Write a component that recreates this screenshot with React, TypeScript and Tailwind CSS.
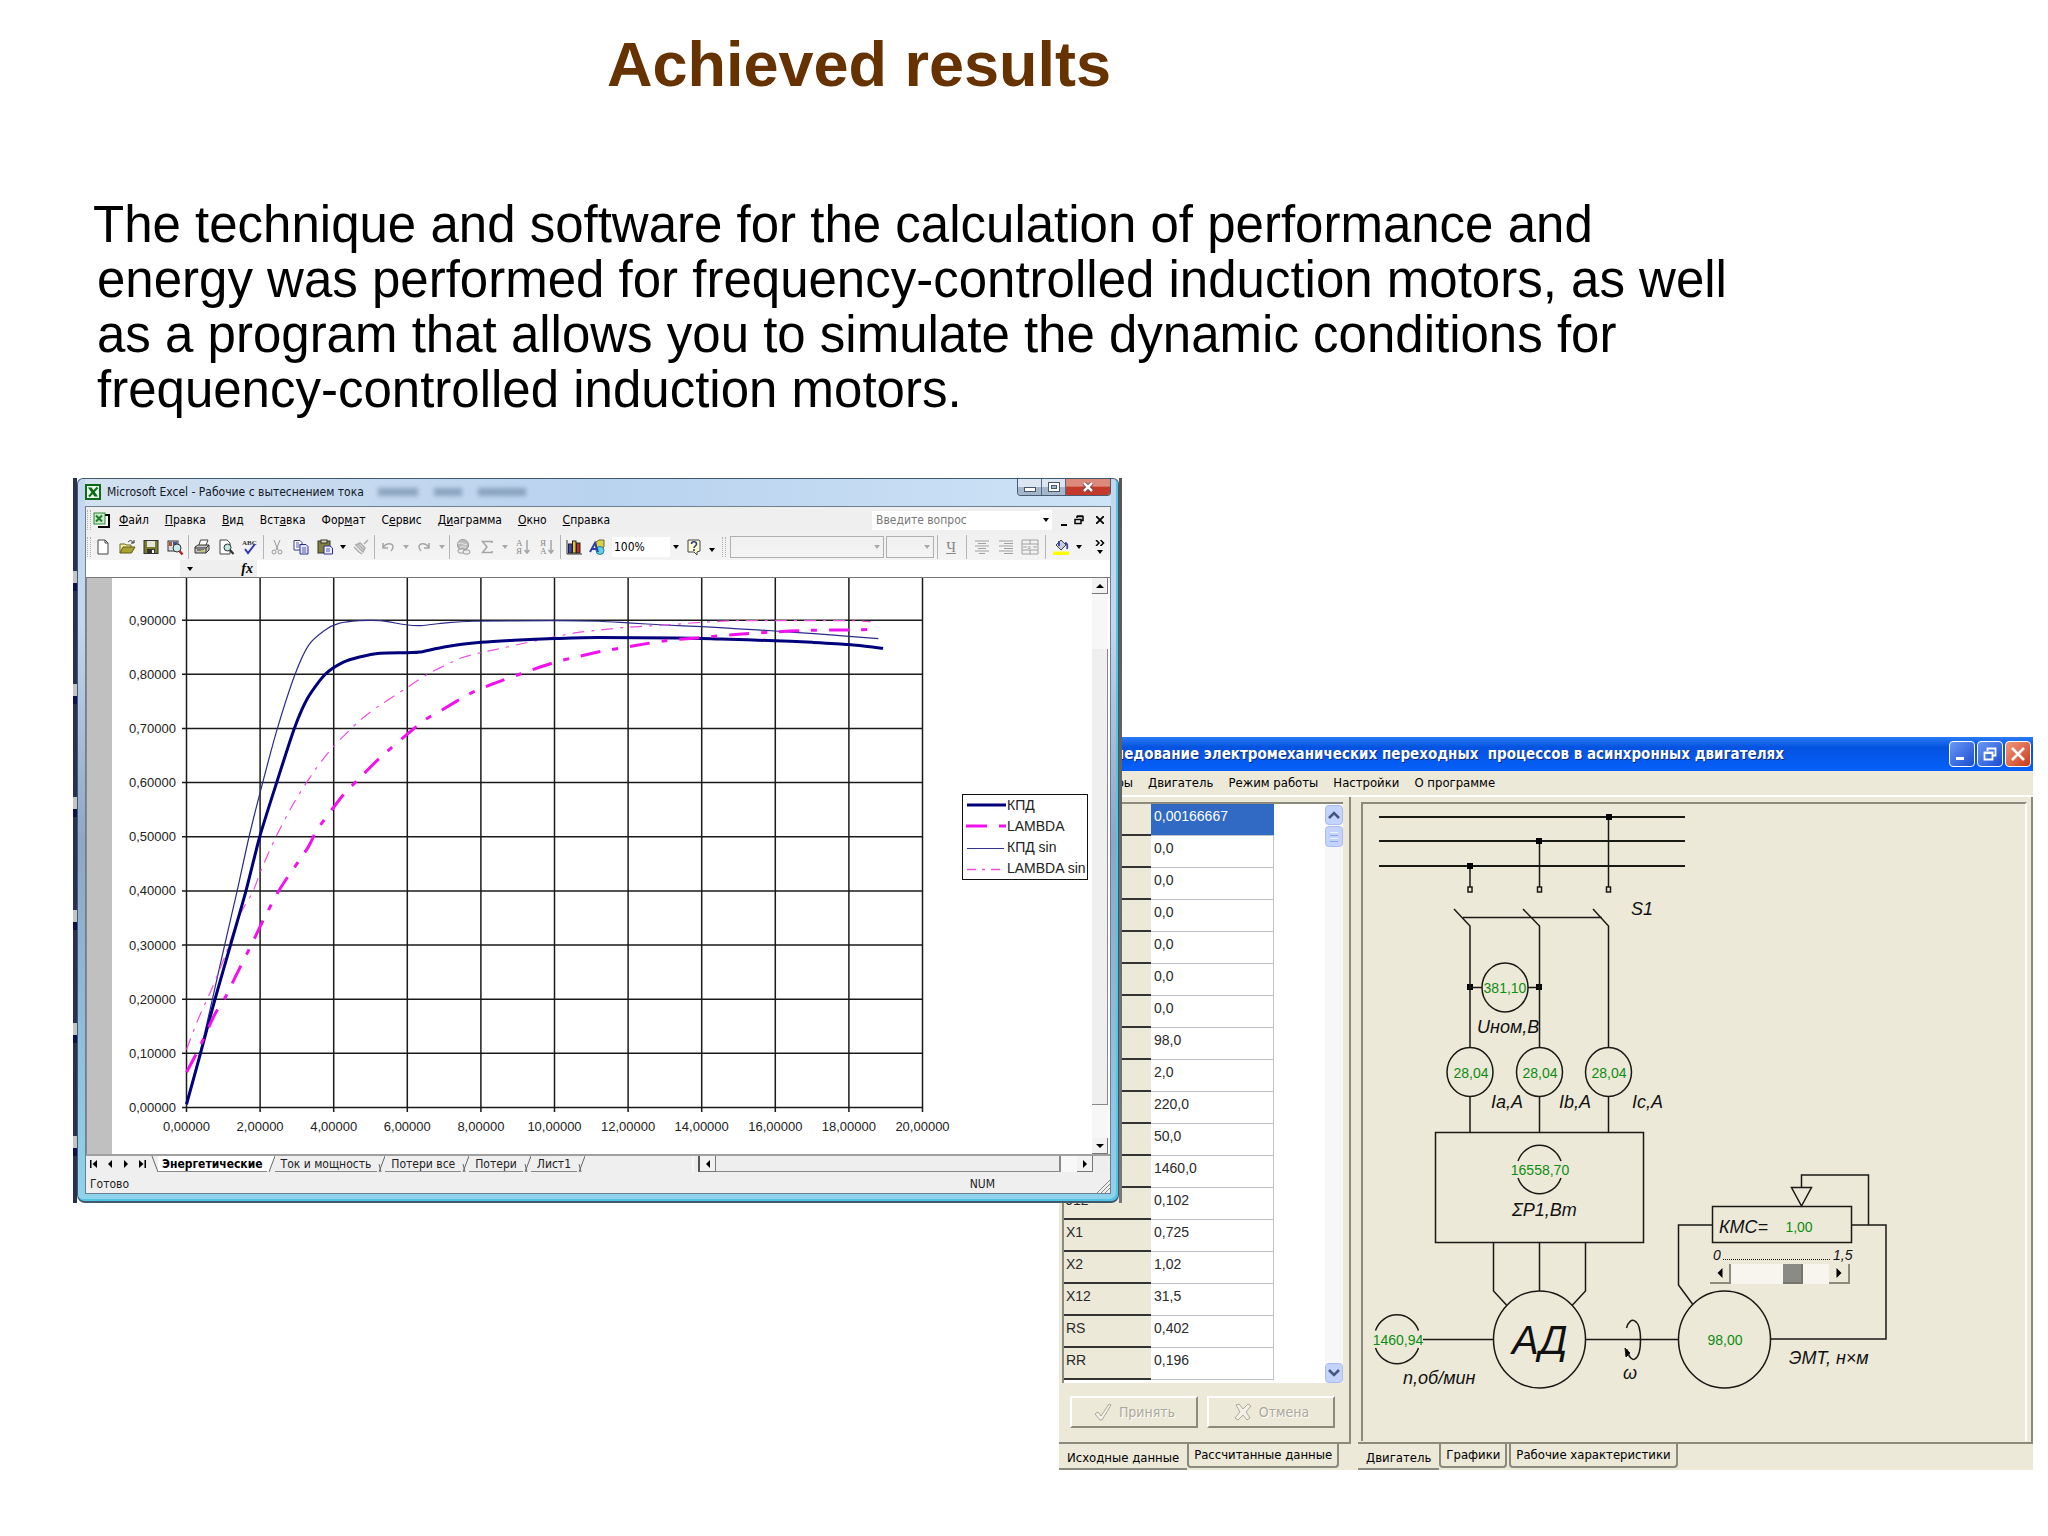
import React from 'react';

type Point = [number, number];

const KPD: Point[] = [
  [0, 0.006], [0.36, 0.095], [0.77, 0.199], [1.2, 0.301], [1.62, 0.401], [1.99, 0.5], [2.45, 0.6],
  [2.93, 0.7], [3.3, 0.757], [3.77, 0.8], [4.25, 0.822], [4.7, 0.832], [5.26, 0.839], [6.01, 0.84],
  [6.34, 0.841], [7.04, 0.851], [8, 0.859], [8.9, 0.863], [10, 0.866], [11.2, 0.868], [13.3, 0.867],
  [14.5, 0.865], [16, 0.862], [17, 0.859], [18, 0.855], [18.93, 0.848],
];

const KPD_SIN: Point[] = [
  [0, 0.006], [0.4, 0.11], [0.77, 0.22], [1.04, 0.301], [1.38, 0.401], [1.7, 0.5], [2.07, 0.6], [2.47, 0.7],
  [2.95, 0.8], [3.32, 0.854], [3.75, 0.881], [4.14, 0.894], [4.7, 0.899], [5.26, 0.899], [6.01, 0.891],
  [6.38, 0.89], [7.04, 0.895], [7.8, 0.898], [10, 0.899], [11.2, 0.898], [12, 0.895], [13, 0.891],
  [14, 0.888], [15, 0.884], [16, 0.88], [17.05, 0.875], [18, 0.87], [18.8, 0.866],
];

const LAMBDA: Point[] = [
  [0, 0.065], [0.31, 0.105], [0.77, 0.172], [1.06, 0.204], [1.34, 0.243], [1.76, 0.3], [2.08, 0.345],
  [2.55, 0.405], [3.3, 0.48], [3.53, 0.511], [3.95, 0.55], [4.28, 0.579], [4.7, 0.608], [5.26, 0.646],
  [6.01, 0.69], [6.48, 0.716], [6.94, 0.734], [7.69, 0.764], [8.35, 0.783], [9.09, 0.801], [10, 0.822],
  [10.6, 0.832], [11.25, 0.842], [12.2, 0.853], [13, 0.862], [14, 0.868], [15, 0.874], [15.9, 0.878],
  [16.8, 0.881], [18, 0.882], [18.8, 0.883],
];

const LAMBDA_SIN: Point[] = [
  [0, 0.107], [0.31, 0.162], [0.68, 0.218], [1.06, 0.282], [1.43, 0.353], [1.8, 0.398], [2.02, 0.437],
  [2.41, 0.497], [2.93, 0.564], [3.49, 0.623], [4, 0.667], [4.7, 0.714], [5.26, 0.743], [6.01, 0.776],
  [6.57, 0.801], [7.5, 0.831], [8.35, 0.845], [9.28, 0.859], [10, 0.869], [10.6, 0.877], [11.25, 0.882],
  [12, 0.887], [13, 0.891], [14, 0.896], [15, 0.899], [18, 0.899], [18.6, 0.897],
];

const X_TICKS = [0, 2, 4, 6, 8, 10, 12, 14, 16, 18, 20];
const Y_TICKS = [0, 0.1, 0.2, 0.3, 0.4, 0.5, 0.6, 0.7, 0.8, 0.9];

const chartX = (v: number) => 74.5 + v * 36.8;
const chartY = (v: number) => 529.5 - v * 541.5;
const tickLabel = (v: number) => v.toFixed(5).replace('.', ',');

// Catmull-Rom spline through the measured points
const toPath = (data: Point[]) => {
  const pts = data.map(([x, y]) => [chartX(x), chartY(y)]);
  let d = `M${pts[0][0]} ${pts[0][1]}`;
  for (let i = 0; i < pts.length - 1; i++) {
    const p0 = pts[Math.max(i - 1, 0)];
    const p1 = pts[i];
    const p2 = pts[i + 1];
    const p3 = pts[Math.min(i + 2, pts.length - 1)];
    d += `C${p1[0] + (p2[0] - p0[0]) / 8} ${p1[1] + (p2[1] - p0[1]) / 8}`;
    d += ` ${p2[0] - (p3[0] - p1[0]) / 8} ${p2[1] - (p3[1] - p1[1]) / 8} ${p2[0]} ${p2[1]}`;
  }
  return d;
};

const EXCEL_MENU: [string, string, string][] = [
  ['', 'Ф', 'айл'],
  ['', 'П', 'равка'],
  ['', 'В', 'ид'],
  ['Вст', 'а', 'вка'],
  ['Фор', 'м', 'ат'],
  ['С', 'е', 'рвис'],
  ['Д', 'и', 'аграмма'],
  ['', 'О', 'кно'],
  ['', 'С', 'правка'],
];

const PARAMS: [string, string][] = [
  ['', '0,00166667'],
  ['', '0,0'],
  ['', '0,0'],
  ['', '0,0'],
  ['', '0,0'],
  ['', '0,0'],
  ['', '0,0'],
  ['', '98,0'],
  ['', '2,0'],
  ['', '220,0'],
  ['', '50,0'],
  ['', '1460,0'],
  ['J12', '0,102'],
  ['X1', '0,725'],
  ['X2', '1,02'],
  ['X12', '31,5'],
  ['RS', '0,402'],
  ['RR', '0,196'],
];

const Tool = ({ label, children }: { label: string; children: React.ReactNode }) => (
  <button aria-label={label} className="flex h-5 w-6 shrink-0 items-center justify-center">
    <svg viewBox="0 0 16 16" className="size-4 overflow-visible" fill="none">
      {children}
    </svg>
  </button>
);

const Arrow = ({ label, muted = false }: { label: string; muted?: boolean }) => (
  <button aria-label={label} className="flex h-5 w-3 shrink-0 items-center justify-center">
    <svg viewBox="0 0 6 4" className="h-1 w-1.5">
      <path d="M0 0h6L3 4z" fill={muted ? '#a9a9a9' : '#000'} />
    </svg>
  </button>
);

const Sep = () => <div className="mx-px h-6 w-px shrink-0 bg-[#b5b5b5]" />;

const Grip = () => <div className="h-5 w-1 shrink-0 border-x border-dotted border-[#b0b0b0]" />;

const ExcelLogo = () => (
  <svg viewBox="0 0 16 16" className="size-4 shrink-0">
    <rect x="1" y="1" width="14" height="14" fill="#e9f6e9" stroke="#0d6b17" strokeWidth="2" />
    <path d="M3 3.500h3.500L13 12.500H9.500z" fill="#0d6b17" />
    <path d="M12.500 3.500L4 12.500" stroke="#0d6b17" strokeWidth="2" />
  </svg>
);

const ScrollButton = ({ label, d }: { label: string; d: string }) => (
  <button
    aria-label={label}
    className="flex size-4 shrink-0 items-center justify-center border-r border-b border-[#777] bg-[#f3f2f3]"
  >
    <svg viewBox="0 0 8 8" className="size-2">
      <path d={d} fill="#000" />
    </svg>
  </button>
);

const ExcelTitleBar = () => (
  <div className="flex h-[27px] items-start justify-between bg-linear-to-r from-[#d3e1f0] via-[#b9d2ee] to-[#cde3f6]">
    <div className="flex items-center gap-1.5 pt-[5px]">
      <ExcelLogo />
      <span className="text-[12px] leading-4 whitespace-nowrap text-[#111827]">
        Microsoft Excel - Рабочие с вытеснением тока
      </span>
      <div className="ml-2 flex gap-4 blur-[2px]">
        <div className="h-2 w-10 bg-[#5a7391]/50" />
        <div className="h-2 w-7 bg-[#5a7391]/50" />
        <div className="h-2 w-12 bg-[#5a7391]/50" />
      </div>
    </div>
    <div className="flex h-[17px] overflow-hidden rounded-b border border-t-0 border-[#4a5b70]">
      <button
        aria-label="Свернуть"
        className="flex w-6 items-center justify-center border-r border-[#5a6b80] bg-linear-to-b from-[#dce6f0] from-50% to-[#a3b6ca] to-50%"
      >
        <svg viewBox="0 0 12 5" className="mt-1 h-[5px] w-3">
          <rect x="0.5" y="0.5" width="11" height="4" fill="#fff" stroke="#47566a" />
        </svg>
      </button>
      <button
        aria-label="Развернуть"
        className="flex w-6 items-center justify-center border-r border-[#5a6b80] bg-linear-to-b from-[#dce6f0] from-50% to-[#a3b6ca] to-50%"
      >
        <svg viewBox="0 0 12 10" className="h-2.5 w-3">
          <rect x="0.5" y="0.5" width="11" height="9" fill="#fff" stroke="#47566a" />
          <rect x="3.5" y="3.5" width="5" height="3" fill="#a3b6ca" stroke="#47566a" />
        </svg>
      </button>
      <button
        aria-label="Закрыть"
        className="flex w-[44px] items-center justify-center bg-linear-to-b from-[#dd8a7c] from-45% to-[#c23a2c] to-50%"
      >
        <svg viewBox="0 0 12 10" className="h-2.5 w-3">
          <path d="M2 1l8 8M10 1L2 9" stroke="#5c3330" strokeWidth="4" />
          <path d="M2 1l8 8M10 1L2 9" stroke="#fff" strokeWidth="2.5" />
        </svg>
      </button>
    </div>
  </div>
);

const ExcelMenuBar = () => (
  <div className="flex h-[26px] items-center bg-[#f0eff0] pr-1 pl-px">
    <Grip />
    <svg viewBox="0 0 18 17" className="ml-0.5 h-[17px] w-[18px] shrink-0">
      <path d="M7 3h9v12H5" fill="#fff" stroke="#000" strokeWidth="2" />
      <rect x="1" y="1" width="11" height="11" fill="#cfe8cf" stroke="#2a8a35" />
      <path d="M3 3.500l6 6M9 3.500l-6 6" stroke="#1c7d28" strokeWidth="2" />
    </svg>
    <nav className="ml-2 flex gap-4 text-[12px] leading-4 text-black">
      {EXCEL_MENU.map(([before, key, after]) => (
        <button key={before + key + after} className="whitespace-nowrap">
          {before}
          <u>{key}</u>
          {after}
        </button>
      ))}
    </nav>
    <input
      aria-label="Введите вопрос"
      placeholder="Введите вопрос"
      className="ml-auto h-[19px] w-[168px] bg-white px-1 text-[12px] leading-4 placeholder:text-[#777]"
    />
    <div className="bg-white">
      <Arrow label="Список вопросов" />
    </div>
    <button aria-label="Свернуть книгу" className="ml-1 flex h-4 w-4 items-end justify-center pb-0.5">
      <span className="h-0.5 w-1.5 bg-black" />
    </button>
    <button aria-label="Восстановить книгу" className="ml-0.5">
      <svg viewBox="0 0 10 10" className="size-2.5" fill="none" stroke="#000">
        <path d="M3 3V1.500h6v4H7M3 1h6" strokeWidth="1.5" />
        <path d="M1 4.500h6v4H1zM1 4.500h6" strokeWidth="1.5" />
      </svg>
    </button>
    <button aria-label="Закрыть книгу" className="mr-0.5 ml-3">
      <svg viewBox="0 0 8 8" className="size-2" stroke="#000" strokeWidth="1.8">
        <path d="M0 0l8 8M8 0L0 8" />
      </svg>
    </button>
  </div>
);

const ExcelToolbar = () => (
  <div className="flex h-[27px] items-center bg-linear-to-b from-[#f1f0f1] to-[#f5f4f5] pr-1 pl-px">
    <Grip />
    <Tool label="Создать">
      <path d="M3 1h7l3 3v11H3z" fill="#fff" stroke="#444" />
      <path d="M10 1v3h3" stroke="#444" />
    </Tool>
    <Tool label="Открыть">
      <path d="M1 14V5h5l1 1h5v3" fill="#f5ef9c" stroke="#6d6a1f" />
      <path d="M1 14l3-6h12l-3.500 6z" fill="#a8a333" stroke="#5d5a18" />
      <path d="M9 3c2-2 4-2 5 1M12 4h3V1" stroke="#333" />
    </Tool>
    <Tool label="Сохранить">
      <rect x="1" y="1.5" width="14" height="13" fill="#7b7c2c" stroke="#333" />
      <rect x="4" y="2" width="8" height="6" fill="#e5e6da" />
      <rect x="4" y="10" width="8" height="4" fill="#333" />
      <rect x="9" y="11" width="2" height="3" fill="#fff" />
    </Tool>
    <Tool label="Найти">
      <rect x="1" y="2" width="10" height="10" fill="#d8dde6" stroke="#333" />
      <rect x="2" y="3" width="3" height="4" fill="#b2552b" />
      <rect x="6" y="3" width="4" height="3" fill="#3a55a5" />
      <circle cx="10" cy="9" r="4" fill="#c8ecee" stroke="#333" />
      <path d="M12.500 12l3 3.500" stroke="#b5232c" strokeWidth="2.5" />
    </Tool>
    <Sep />
    <Tool label="Печать">
      <path d="M5 6l1.500-5H14l-2 5" fill="#fff" stroke="#444" />
      <path d="M1 8l3-2h11v5l-3 3H1z" fill="#c4c4c0" stroke="#333" />
      <path d="M1 9h11l3-3M12 9v5M3 11h7" stroke="#333" />
      <rect x="7" y="11" width="3" height="1.5" fill="#c8c32c" />
    </Tool>
    <Tool label="Просмотр">
      <path d="M2 1h7l3 3v11H2z" fill="#fff" stroke="#444" />
      <circle cx="9.5" cy="8.5" r="3.5" fill="#bde6df" stroke="#333" />
      <path d="M12 11l3.500 4" stroke="#333" strokeWidth="2" />
    </Tool>
    <Tool label="Орфография">
      <text x="0" y="6" fontSize="7" fontFamily="Liberation Serif, serif" fontWeight="700" fill="#333">ABC</text>
      <path d="M3 10l3 4 7-9" stroke="#3437b5" strokeWidth="2" />
    </Tool>
    <Sep />
    <Tool label="Вырезать">
      <path d="M5 1l4 10M11 1L7 11" stroke="#999" />
      <circle cx="5" cy="13" r="2" stroke="#999" />
      <circle cx="11" cy="13" r="2" stroke="#999" />
    </Tool>
    <Tool label="Копировать">
      <path d="M1 1.500h6l2 2V11H1z" fill="#fff" stroke="#3b3b7a" />
      <path d="M7 5.500h6l2 2V15H7z" fill="#e3e5ff" stroke="#2e2e91" />
      <path d="M3 4h3M3 6h4M3 8h4M9 9h4M9 11h4M9 13h4" stroke="#5659ad" />
    </Tool>
    <Tool label="Вставить">
      <rect x="1" y="2" width="12" height="12" fill="#84813c" stroke="#333" />
      <rect x="4" y="1" width="6" height="3" fill="#d8d8b5" stroke="#333" />
      <path d="M7 7h6l2.500 2v6H7z" fill="#eef" stroke="#2e2e91" />
      <path d="M9 10h4M9 12h4" stroke="#5659ad" />
    </Tool>
    <Arrow label="Параметры вставки" />
    <Tool label="Формат по образцу">
      <path d="M15 1l-4 4M3 6l4-2 5 5-2 4zM3 6l7 7M5 5l6 6M1 8l5 5 3 2" stroke="#aaa" strokeWidth="1.5" />
    </Tool>
    <Sep />
    <Tool label="Отменить">
      <path d="M3 4v5h5M3 9c2-5 10-6 10-1 0 2-1 3-2 4" stroke="#a5a5a5" strokeWidth="1.5" />
    </Tool>
    <Arrow label="История отмены" muted />
    <Tool label="Вернуть">
      <path d="M13 4v5H8M13 9C11 4 3 3 3 8c0 2 1 3 2 4" stroke="#a5a5a5" strokeWidth="1.5" />
    </Tool>
    <Arrow label="История возврата" muted />
    <Sep />
    <Tool label="Гиперссылка">
      <circle cx="8" cy="6" r="5.5" fill="#bbb" stroke="#999" />
      <path d="M3 5c3-3 6 2 9 0M5 9c2-3 4 0 6-1" stroke="#eee" />
      <rect x="3" y="10" width="7" height="4" rx="2" stroke="#999" fill="#eee" />
      <rect x="8" y="11" width="7" height="4" rx="2" stroke="#999" fill="#eee" />
    </Tool>
    <Tool label="Автосумма">
      <path d="M13 4V2.500H3.500L8 8l-4.500 5.500H13V12" stroke="#a5a5a5" strokeWidth="1.5" />
    </Tool>
    <Arrow label="Функции" muted />
    <Tool label="Сортировка по возрастанию">
      <text x="1" y="7" fontSize="9" fontFamily="Liberation Serif, serif" fill="#888">А</text>
      <text x="1" y="15" fontSize="9" fontFamily="Liberation Serif, serif" fill="#888">Я</text>
      <path d="M12 1v13M9.500 11l2.500 3 2.500-3" stroke="#a5a5a5" strokeWidth="1.5" />
    </Tool>
    <Tool label="Сортировка по убыванию">
      <text x="1" y="7" fontSize="9" fontFamily="Liberation Serif, serif" fill="#888">Я</text>
      <text x="1" y="15" fontSize="9" fontFamily="Liberation Serif, serif" fill="#888">А</text>
      <path d="M12 1v13M9.500 11l2.500 3 2.500-3" stroke="#a5a5a5" strokeWidth="1.5" />
    </Tool>
    <Sep />
    <Tool label="Мастер диаграмм">
      <path d="M1 1v14h15" stroke="#333" />
      <rect x="2.5" y="5" width="3.5" height="9" fill="#3c48c0" stroke="#222" />
      <rect x="6.5" y="2" width="3.5" height="12" fill="#e2c531" stroke="#222" />
      <rect x="10.5" y="4" width="3.5" height="10" fill="#c22c2c" stroke="#222" />
    </Tool>
    <Tool label="Рисование">
      <path d="M6 3l3-2h5v7l-3 2H6z" fill="#d8cf4a" stroke="#6d6a1f" />
      <circle cx="10" cy="11.5" r="4" fill="#5fd0e8" stroke="#2b7d93" />
      <path d="M0 13l5-9 3 9M2 10h5" stroke="#2b40a5" strokeWidth="2" />
    </Tool>
    <input
      aria-label="Масштаб"
      defaultValue="100%"
      className="ml-0.5 h-5 w-[58px] bg-white px-0.5 text-[12px] leading-4 text-black"
    />
    <Arrow label="Список масштабов" />
    <Tool label="Справка">
      <path d="M2 1h11l1 1v10l-3 1v3l-3-3H2z" fill="#fdfbd0" stroke="#444" />
      <path d="M5.500 5c0-3 5-3 5 0 0 2-2.500 2-2.500 4M8 10v2" stroke="#2b3a80" strokeWidth="1.6" />
    </Tool>
    <div className="self-end">
      <Arrow label="Кнопки панели" />
    </div>
    <div className="mx-1">
      <Grip />
    </div>
    <div className="flex h-[22px] w-[154px] justify-end border border-[#b0b0b0]">
      <Arrow label="Шрифт" muted />
    </div>
    <div className="ml-0.5 flex h-[22px] w-12 justify-end border border-[#b0b0b0]">
      <Arrow label="Размер шрифта" muted />
    </div>
    <div className="ml-0.5">
      <Sep />
    </div>
    <button aria-label="Подчеркнутый" className="w-6 font-['Liberation_Serif',serif] text-[15px] leading-4 text-[#888] underline">
      Ч
    </button>
    <div className="mx-0.5">
      <Sep />
    </div>
    <Tool label="По центру">
      <path d="M1 2h14M4 4.500h8M1 7h14M4 9.500h8M1 12h14M5 14.500h6" stroke="#a0a0a0" />
    </Tool>
    <Tool label="По правому краю">
      <path d="M1 2h14M6 4.500h9M1 7h14M6 9.500h9M1 12h14M6 14.500h9" stroke="#a0a0a0" />
    </Tool>
    <Tool label="Объединить">
      <path d="M0 1h16v14H0zM0 5h16M0 11h16M8 1v4M8 11v4M1 8h4M11 8h4" stroke="#a0a0a0" />
      <text x="5.5" y="10" fontSize="7" fontFamily="Liberation Serif, serif" fill="#888">a</text>
    </Tool>
    <div className="mx-0.5">
      <Sep />
    </div>
    <Tool label="Цвет заливки">
      <path d="M3 6l5-5 5 5-5 5z" fill="#c9cbd8" stroke="#444" />
      <path d="M6 2v5M12 4c2 0 3 2 2 6" stroke="#3240a0" strokeWidth="1.8" />
      <rect x="0" y="12.5" width="16" height="3.5" fill="#ff0" />
    </Tool>
    <Arrow label="Выбор цвета" />
    <button aria-label="Другие кнопки" className="ml-auto flex w-3 flex-col items-center gap-1">
      <svg viewBox="0 0 10 6" className="h-1.5 w-2.5" fill="none" stroke="#000" strokeWidth="1.5">
        <path d="M1 0l3 3-3 3M5.500 0l3 3-3 3" />
      </svg>
      <svg viewBox="0 0 6 4" className="h-1 w-1.5">
        <path d="M0 0h6L3 4z" />
      </svg>
    </button>
  </div>
);

const EfficiencyChart = () => (
  <svg
    viewBox="0 0 980 576"
    className="block min-w-0 flex-1 bg-white font-['Liberation_Sans',sans-serif] text-[13px]"
  >
    <g stroke="#1a1a1a" strokeWidth="1.5">
      {X_TICKS.map((t) => (
        <line key={t} x1={chartX(t)} x2={chartX(t)} y1="0" y2="534" />
      ))}
      {Y_TICKS.map((t) => (
        <line key={t} x1="70" x2="811" y1={chartY(t)} y2={chartY(t)} />
      ))}
    </g>
    <g fill="#222" textAnchor="middle">
      {X_TICKS.map((t) => (
        <text key={t} x={chartX(t)} y="553">
          {tickLabel(t)}
        </text>
      ))}
    </g>
    <g fill="#222" textAnchor="end">
      {Y_TICKS.map((t) => (
        <text key={t} x="64" y={chartY(t) + 4.5}>
          {tickLabel(t)}
        </text>
      ))}
    </g>
    <g fill="none" strokeLinejoin="round">
      <path d={toPath(KPD_SIN)} stroke="#2b2b8c" strokeWidth="1.2" />
      <path d={toPath(LAMBDA_SIN)} stroke="#ee4fdc" strokeWidth="1.2" strokeDasharray="12 7 3 7" />
      <path d={toPath(KPD)} stroke="#00007c" strokeWidth="3" />
      <path d={toPath(LAMBDA)} stroke="#f410ee" strokeWidth="3" strokeDasharray="20 12 6 12" />
    </g>
    <rect x="850.5" y="216.5" width="125" height="85" fill="#fff" stroke="#111" />
    <g fill="none">
      <path d="M855 227h39" stroke="#00007c" strokeWidth="3" />
      <path d="M854 248h21M887 248h7" stroke="#f410ee" strokeWidth="3" />
      <path d="M855 270.500h37" stroke="#34348f" strokeWidth="1" />
      <path d="M855 291.500h9M870 291.500h3M879 291.500h9" stroke="#ee4fdc" strokeWidth="1.5" />
    </g>
    <g fill="#222" className="text-[14px]">
      <text x="895" y="232">КПД</text>
      <text x="895" y="253">LAMBDA</text>
      <text x="895" y="274">КПД sin</text>
      <text x="895" y="295">LAMBDA sin</text>
    </g>
  </svg>
);

const SHEETS = ['Ток и мощность', 'Потери все', 'Потери', 'Лист1'];

const SheetEdge = ({ d, white = false }: { d: string; white?: boolean }) => (
  <svg viewBox="0 0 8 16" className="h-4 w-2 shrink-0" fill="none">
    {white && <path d="M0 0h8L2 16H0z" fill="#fff" />}
    <path d={d} stroke="#666" />
  </svg>
);

const SheetTabs = () => (
  <div className="flex h-[18px] items-center border-t-2 border-[#a0a0a0] bg-[#f0eff0]">
    {[
      ['Первый лист', 'M0 0h1.500v8H0zM7 0v8L2.500 4z'],
      ['Предыдущий лист', 'M6 0v8L2 4z'],
      ['Следующий лист', 'M2 0v8l4-4z'],
      ['Последний лист', 'M8 0H6.500v8H8zM1 0v8l4.500-4z'],
    ].map(([label, d]) => (
      <button key={label} aria-label={label} className="flex w-4 shrink-0 justify-center">
        <svg viewBox="0 0 8 8" className="size-2">
          <path d={d} />
        </svg>
      </button>
    ))}
    <div className="flex flex-1 items-center text-[12px] leading-4 text-[#222]">
      <SheetEdge d="M2 0l6 16" />
      <button className="h-4 border-b border-[#888] bg-white px-1 font-bold whitespace-nowrap text-black">
        Энергетические
      </button>
      <SheetEdge d="M8 0L2 16" white />
      {SHEETS.map((name) => (
        <React.Fragment key={name}>
          <button className="h-4 border-b border-[#888] px-1.5 whitespace-nowrap">{name}</button>
          <SheetEdge d="M8 0L2 16M2 8l2 8" />
        </React.Fragment>
      ))}
    </div>
    <div className="flex w-[418px] shrink-0 bg-[#f8f8f8]">
      <div className="w-2 border-x-2 border-r-[#555] border-l-[#f8f8f8] bg-[#eee]" />
      <ScrollButton label="Влево" d="M6 0v8L2 4z" />
      <div className="mr-4 flex-1 border-r-2 border-b border-[#888] bg-[#efeeef]" />
      <ScrollButton label="Вправо" d="M2 0v8l4-4z" />
      <div className="w-[17px] bg-[#efeeef]" />
    </div>
  </div>
);

const ExcelWindow = () => (
  <div className="z-10 col-start-1 row-start-1 ml-[73px] flex w-[calc(50%+25px)] self-start font-['DejaVu_Sans_Condensed','Noto_Sans',sans-serif]">
    <div className="w-1 bg-[repeating-linear-gradient(to_bottom,#2c3050_0,#2c3050_93px,#c4c4c4_93px,#c4c4c4_105px,#10104f_105px,#10104f_113px)]" />
    <div className="min-w-0 flex-1 rounded-t-md rounded-b-lg border border-b-2 border-[#3f5a6c] bg-linear-to-b from-[#c3d8ee] from-20% via-[#8fa6c6] via-50% to-[#8fd3ec] px-[7px] pb-[7px] shadow-[inset_-2px_-2px_0_#54c3e4]">
      <ExcelTitleBar />
      <div className="border border-[#6e7f8f]">
        <ExcelMenuBar />
        <ExcelToolbar />
        <div className="flex h-[18px] border-b border-[#777] bg-white">
          <div className="ml-[94px] flex w-[77px] items-center justify-between bg-[#f0eff0] pr-1 pl-1">
            <Arrow label="Поле имени" />
            <button className="font-['Liberation_Serif',serif] text-[14px] leading-4 font-bold italic">fx</button>
          </div>
        </div>
        <div className="flex bg-white">
          <div className="w-[26px] shrink-0 border-l border-[#888] bg-[#c0c0c0]" />
          <EfficiencyChart />
          <div className="mr-0.5 flex w-4 shrink-0 flex-col bg-[#f8f7f8]">
            <ScrollButton label="Вверх" d="M0 6h8L4 2z" />
            <div className="mt-[55px] mb-[33px] flex-1 border-r border-b border-[#888] bg-[#f0eff0]" />
            <ScrollButton label="Вниз" d="M0 2h8L4 6z" />
          </div>
        </div>
        <SheetTabs />
        <div className="flex h-[21px] items-center bg-[#f0eff0] pt-[3px] pl-1 text-[12px] leading-4 text-[#222]">
          <span>Готово</span>
          <span className="mr-[101px] ml-auto">NUM</span>
          <svg viewBox="0 0 14 14" className="size-3.5 self-end" stroke="#888">
            <path d="M1 14L14 1M5 14l9-9M9 14l5-5" />
          </svg>
        </div>
      </div>
    </div>
    <div className="w-[3px] bg-linear-to-b from-[#555] to-[#777]" />
  </div>
);

const XpButton = ({ label, close = false, children }: { label: string; close?: boolean; children: React.ReactNode }) => (
  <button
    aria-label={label}
    className={
      close
        ? 'flex size-[26px] items-center justify-center rounded border border-white bg-linear-to-br from-[#f0987c] to-[#c8360f]'
        : 'flex size-[26px] items-center justify-center rounded border border-white bg-linear-to-br from-[#6b97f5] to-[#1a4bd0]'
    }
  >
    <svg viewBox="0 0 16 16" className="size-4" fill="none" stroke="#fff">
      {children}
    </svg>
  </button>
);

const XpScrollButton = ({ label, d }: { label: string; d: string }) => (
  <button
    aria-label={label}
    className="flex h-5 w-[18px] shrink-0 items-center justify-center rounded-sm border border-[#a9bdf0] bg-[#c3d3fd]"
  >
    <svg viewBox="0 0 12 8" className="h-2 w-3" fill="none" stroke="#44557f" strokeWidth="2.5">
      <path d={d} />
    </svg>
  </button>
);

const ParameterTable = () => (
  <div className="flex h-[581px] items-stretch border-t-2 border-l-2 border-[#8b8a7c] bg-white">
    <table className="w-[210px] border-separate border-spacing-0 self-start font-['Liberation_Sans',sans-serif] text-[14px] leading-5 text-[#2a2a2a]">
      <tbody>
        {PARAMS.map(([name, value], i) => (
          <tr key={i} className="h-8 align-top">
            <th scope="row" className="w-[87px] border-b-2 border-[#333] bg-[#ece9d8] px-0.5 py-0.5 text-left font-normal">
              {name}
            </th>
            <td
              className={
                i === 0
                  ? 'border-b border-[#c0c0c8] bg-[#316ac5] px-[3px] py-0.5 text-white'
                  : 'border-r border-b border-[#c0c0c8] px-[3px] py-0.5'
              }
            >
              {value}
            </td>
          </tr>
        ))}
      </tbody>
    </table>
    <div className="ml-auto flex w-[18px] flex-col bg-[#f7f7fa] pt-px">
      <XpScrollButton label="Вверх" d="M1 7l5-5 5 5" />
      <div className="mt-px flex h-[21px] flex-col items-center justify-center gap-0.5 rounded-sm border border-[#a9bdf0] bg-[#c3d3fd]">
        <div className="h-px w-2 bg-[#eef4fe]" />
        <div className="h-px w-2 bg-[#8ca9ee]" />
        <div className="h-px w-2 bg-[#eef4fe]" />
        <div className="h-px w-2 bg-[#8ca9ee]" />
      </div>
      <div className="flex-1" />
      <XpScrollButton label="Вниз" d="M1 1l5 5 5-5" />
    </div>
  </div>
);

const FormButton = ({ label, children }: { label: string; children: React.ReactNode }) => (
  <button
    disabled
    className="flex h-8 w-32 items-center justify-center gap-1.5 border-2 border-t-white border-r-[#8b8a7c] border-b-[#8b8a7c] border-l-white text-[14px] text-[#aca899] text-shadow-[1px_1px_0_#fff]"
  >
    <svg viewBox="0 0 20 20" className="size-5" fill="#f4f2e8" stroke="#aca899">
      {children}
    </svg>
    {label}
  </button>
);

const BottomTab = ({ active = false, children }: { active?: boolean; children: React.ReactNode }) => (
  <button
    className={
      active
        ? 'h-[26px] border-b-2 border-[#8b8a7c] bg-[#ece9d8] px-2 pt-1 whitespace-nowrap'
        : 'mr-0.5 h-6 rounded-b-sm border-x-2 border-b-2 border-[#8b8a7c] bg-[#ece9d8] px-[5px] whitespace-nowrap'
    }
  >
    {children}
  </button>
);

const MotorScheme = () => (
  <div className="relative">
    <svg viewBox="0 0 664 637" className="block h-[637px] w-[664px]" fill="none" stroke="#1a1a14" strokeWidth="1.5">
      <path d="M16 13h306M16 37h306M16 62h306" strokeWidth="2" />
      <path d="M107 62v21M176.500 37v46M245.500 13v70" />
      <g fill="#000" stroke="none">
        <rect x="104" y="59" width="6" height="6" />
        <rect x="173" y="34" width="6" height="6" />
        <rect x="243" y="10" width="6" height="6" />
        <rect x="104" y="180" width="6" height="6" />
        <rect x="173" y="180" width="6" height="6" />
      </g>
      <rect x="105" y="83" width="4" height="5" />
      <rect x="174.5" y="83" width="4" height="5" />
      <rect x="243.5" y="83" width="4" height="5" />
      <path d="M91 105l16 17v122M160 105l16.500 17v122M230 105l15.500 17v122M100 113.500h139" />
      <path d="M107 183.500h12M165 183.500h11" />
      <ellipse cx="142" cy="183.5" rx="23" ry="24.5" />
      <ellipse cx="107" cy="268" rx="23" ry="24.5" />
      <ellipse cx="176.5" cy="268" rx="23" ry="24.5" />
      <ellipse cx="245.5" cy="268" rx="23" ry="24.5" />
      <path d="M107 292.500V328M176.500 292.500V328M245.500 292.500V328" />
      <rect x="72.5" y="328.5" width="208" height="110" />
      <path d="M155 357a23 24.500 0 0 1 43 0M155 374a23 24.500 0 0 0 43 0" />
      <path d="M130.500 438v49l13 14M176.500 438v49M222.500 438v49l-13 14" />
      <ellipse cx="176.5" cy="535.5" rx="46" ry="48.5" />
      <path d="M12.500 526.500a23 24.500 0 0 1 43 0M12.500 544a23 24.500 0 0 0 43 0" />
      <path d="M60 535.500h70.500M222.500 535.500h93" />
      <path d="M263.500 524c3-12 14-11 14 11.500s-10 26-13.500 10" />
      <path d="M262 544l1 9 4-4z" fill="#000" strokeWidth="1" />
      <ellipse cx="361.5" cy="535.5" rx="46" ry="48.5" />
      <path d="M349 421h-33.500v60l14 19M489 421h34v114H407.500M505.500 421v-50h-67v12" />
      <rect x="349.5" y="402.5" width="139" height="36" />
      <path d="M428.500 383.500h20l-10 18.500z" />
      <path d="M360 455.500h108" strokeDasharray="1 1" strokeWidth="1" />
      <g
        fill="#0c8c12"
        stroke="none"
        textAnchor="middle"
        className="font-['Liberation_Sans',sans-serif] text-[14px]"
      >
        <text x="142" y="189">381,10</text>
        <text x="108" y="274">28,04</text>
        <text x="177" y="274">28,04</text>
        <text x="246" y="274">28,04</text>
        <text x="177" y="371">16558,70</text>
        <text x="35" y="541">1460,94</text>
        <text x="362" y="541">98,00</text>
        <text x="436" y="428">1,00</text>
      </g>
      <g fill="#111" stroke="none" className="font-['Liberation_Sans',sans-serif] text-[18px] italic">
        <text x="268" y="111">S1</text>
        <text x="114" y="229">Uном,В</text>
        <text x="128" y="304">Ia,A</text>
        <text x="196" y="304">Ib,A</text>
        <text x="269" y="304">Ic,A</text>
        <text x="149" y="412">ΣP1,Вт</text>
        <text x="40" y="580">n,об/мин</text>
        <text x="260" y="575">ω</text>
        <text x="356" y="429">КМС=</text>
        <text x="426" y="560">ЭМТ, н×м</text>
        <text x="149" y="550" className="text-[40px]">АД</text>
      </g>
      <g fill="#111" stroke="none" className="font-['Liberation_Sans',sans-serif] text-[14px] italic">
        <text x="350" y="456">0</text>
        <text x="470" y="456">1,5</text>
      </g>
    </svg>
    {/* load factor control sits on the scheme */}
    <div className="absolute top-[460px] left-[347px] flex h-5 w-[140px] bg-[#f7f5ee]">
      <button
        aria-label="Уменьшить КМС"
        className="flex w-[21px] items-center justify-center border-r-2 border-b-2 border-[#8b8a7c] bg-[#ece9d8]"
      >
        <svg viewBox="0 0 8 8" className="size-2.5">
          <path d="M6 0v8L2 4z" />
        </svg>
      </button>
      <input
        type="range"
        aria-label="КМС"
        min="0"
        max="1.5"
        step="0.01"
        defaultValue="1"
        className="h-5 w-[98px] appearance-none bg-[#f7f5ee] [&::-webkit-slider-thumb]:h-5 [&::-webkit-slider-thumb]:w-5 [&::-webkit-slider-thumb]:appearance-none [&::-webkit-slider-thumb]:border-r-2 [&::-webkit-slider-thumb]:border-b-2 [&::-webkit-slider-thumb]:border-[#77766a] [&::-webkit-slider-thumb]:bg-[#8a8a86]"
      />
      <button
        aria-label="Увеличить КМС"
        className="flex w-[21px] items-center justify-center border-r-2 border-b-2 border-[#8b8a7c] bg-[#ece9d8]"
      >
        <svg viewBox="0 0 8 8" className="size-2.5">
          <path d="M2 0v8l4-4z" />
        </svg>
      </button>
    </div>
  </div>
);

const MotorWindow = () => (
  <div className="col-start-1 row-start-1 mt-[259px] mr-[15px] w-[calc(50%-50px)] self-start justify-self-end bg-[#ece9d8] font-['DejaVu_Sans_Condensed','Noto_Sans',sans-serif] text-[13px] leading-4 text-black">
    <div className="flex h-[34px] items-center justify-between bg-linear-to-b from-[#2a7bf5] via-[#0453e0] via-30% to-[#0560fb] pr-0.5 pl-7">
      <h2 className="text-[15px] leading-5 font-bold whitespace-pre text-white text-shadow-[1px_1px_0_#0a2a80]">
        Исследование электромеханических переходных  процессов в асинхронных двигателях
      </h2>
      <div className="flex gap-0.5">
        <XpButton label="Свернуть">
          <path d="M2 12.500h8" strokeWidth="3" />
        </XpButton>
        <XpButton label="Восстановить">
          <path d="M5.500 5V2.500h8v7H11M5 2.500h9" strokeWidth="1.8" />
          <path d="M2.500 6.500h8v7h-8zM2 7h9" strokeWidth="1.8" />
        </XpButton>
        <XpButton label="Закрыть" close>
          <path d="M2 2l12 12M14 2L2 14" strokeWidth="2.5" />
        </XpButton>
      </div>
    </div>
    <nav className="flex h-[26px] items-center gap-[15px] border-b-2 border-white pl-1 whitespace-nowrap">
      <button>Параметры</button>
      <button>Двигатель</button>
      <button>Режим работы</button>
      <button>Настройки</button>
      <button>О программе</button>
    </nav>
    <div className="flex justify-between">
      <div className="w-[292px]">
        <div className="h-[647px] border-r-2 border-b-2 border-[#8b8a7c] pt-[5px] pr-1.5 pl-[3px]">
          <ParameterTable />
          <div className="mt-[13px] flex justify-center gap-[9px]">
            <FormButton label="Принять">
              <path d="M2 12l3-2 3 4L16 2l2 1L9 18H7z" />
            </FormButton>
            <FormButton label="Отмена">
              <path d="M3 3l3-1 4 5 5-5 3 2-5 6 4 6-3 2-4-5-5 5-3-2 5-6z" />
            </FormButton>
          </div>
        </div>
        <div className="flex items-start">
          <BottomTab active>Исходные данные</BottomTab>
          <BottomTab>Рассчитанные данные</BottomTab>
        </div>
      </div>
      <div className="w-[675px]">
        <div className="h-[647px] border-r-2 border-b-2 border-[#8b8a7c] pt-[5px] pr-1 pl-[3px]">
          <div className="border-t-2 border-r-2 border-l-2 border-[#8b8a7c] border-r-white">
            <MotorScheme />
          </div>
        </div>
        <div className="flex items-start">
          <BottomTab active>Двигатель</BottomTab>
          <BottomTab>Графики</BottomTab>
          <BottomTab>Рабочие характеристики</BottomTab>
        </div>
      </div>
    </div>
  </div>
);

const App = () => {
  return (
    <main className="min-h-screen bg-white pt-7 pb-16 font-['Liberation_Sans',sans-serif]">
      <h1 className="pr-[330px] text-center text-[63px] leading-[72px] font-bold text-[#663300]">Achieved results</h1>
      <p className="mt-[97px] ml-[97px] max-w-[1660px] -indent-1 text-[51px] leading-[55px] text-black">
        The technique and software for the calculation of performance and energy was performed for
        frequency-controlled induction motors, as well as a program that allows you to simulate the dynamic
        conditions for frequency-controlled induction motors.
      </p>
      <section className="mt-[61px] grid">
        <ExcelWindow />
        <MotorWindow />
      </section>
    </main>
  );
};

export default App;
